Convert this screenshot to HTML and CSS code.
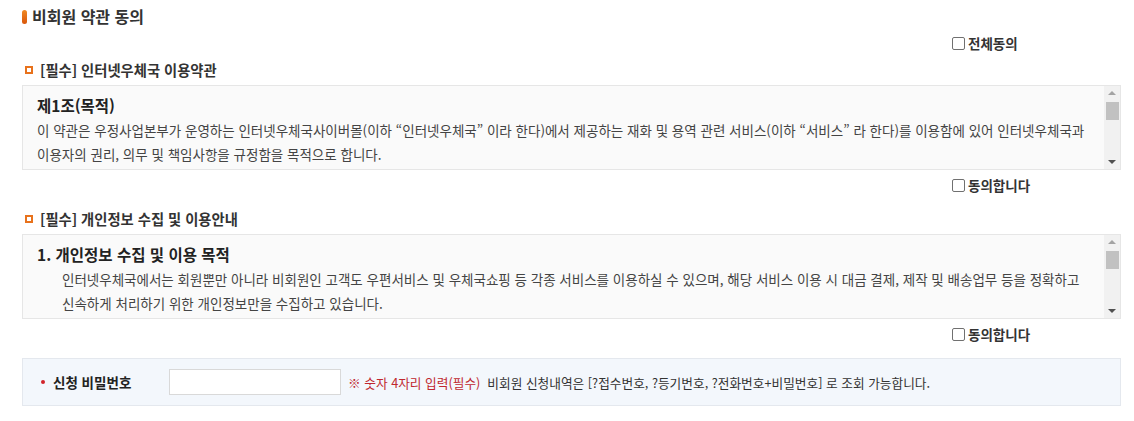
FILE: index.html
```html
<!DOCTYPE html>
<html lang="ko">

<head>
    <meta charset="utf-8">
    <title>비회원 약관 동의</title>
    <link rel="stylesheet" href="styles.css">
</head>

<body>
    <div class="wrap">
        <h2 class="page-title">비회원 약관 동의</h2>

        <div class="agree-all">
            <label><input type="checkbox" id="agreeAll">전체동의</label>
        </div>

        <h3 class="sub-title">[필수] 인터넷우체국 이용약관</h3>
        <div class="terms-box">
            <div class="terms-text">
                <h4>제1조(목적)</h4>
                <p>이 약관은 우정사업본부가 운영하는 인터넷우체국사이버몰(이하 “인터넷우체국” 이라 한다)에서 제공하는 재화 및 용역 관련 서비스(이하 “서비스” 라 한다)를 이용함에 있어 인터넷우체국과 이용자의 권리, 의무 및 책임사항을 규정함을 목적으로 합니다.</p>
                <h4>제2조(정의)</h4>
                <p>① “인터넷우체국”이란 우정사업본부가 재화 또는 용역을 이용자에게 제공하기 위하여 컴퓨터 등 정보통신설비를 이용하여 재화 또는 용역을 거래할 수 있도록 설정한 가상의 영업장을 말합니다.</p>
            </div>
            <div class="scrollbar">
                <span class="sb-up"></span>
                <span class="sb-thumb"></span>
                <span class="sb-track"></span>
                <span class="sb-down"></span>
            </div>
        </div>
        <div class="agree-row">
            <label><input type="checkbox" id="agree1">동의합니다</label>
        </div>

        <h3 class="sub-title">[필수] 개인정보 수집 및 이용안내</h3>
        <div class="terms-box">
            <div class="terms-text">
                <h4>1. 개인정보 수집 및 이용 목적</h4>
                <p class="indent">인터넷우체국에서는 회원뿐만 아니라 비회원인 고객도 우편서비스 및 우체국쇼핑 등 각종 서비스를 이용하실 수 있으며, 해당 서비스 이용 시 대금 결제, 제작 및 배송업무 등을 정확하고 신속하게 처리하기 위한 개인정보만을 수집하고 있습니다.</p>
                <h4>2. 수집하는 개인정보 항목</h4>
                <p class="indent">성명, 휴대전화번호, 주소, 이메일, 신청 비밀번호</p>
            </div>
            <div class="scrollbar">
                <span class="sb-up"></span>
                <span class="sb-thumb"></span>
                <span class="sb-track"></span>
                <span class="sb-down"></span>
            </div>
        </div>
        <div class="agree-row">
            <label><input type="checkbox" id="agree2">동의합니다</label>
        </div>

        <div class="pw-box">
            <span class="pw-label">신청 비밀번호</span>
            <input type="password" class="pw-input" maxlength="4">
            <span class="pw-note">※ 숫자 4자리 입력(필수)</span>
            <span class="pw-desc">비회원 신청내역은 [?접수번호, ?등기번호, ?전화번호+비밀번호] 로 조회 가능합니다.</span>
        </div>
    </div>
</body>

</html>
```

FILE: styles.css
```css
body {
    margin: 0;
    font-family: "Noto Sans CJK KR", "Noto Sans", sans-serif;
    color: #333;
    background: #fff;
}

.wrap {
    width: 1099px;
    padding: 5px 0 0 22px;
}

.page-title {
    position: relative;
    margin: 0;
    padding-left: 10px;
    font-size: 16px;
    line-height: 22px;
    font-weight: bold;
    color: #333;
}

.page-title:before {
    content: "";
    position: absolute;
    left: 0;
    top: 5px;
    width: 5px;
    height: 14px;
    border-radius: 3px;
    background: linear-gradient(#f08a24, #d9560a);
}

.agree-all,
.agree-row {
    display: flex;
    padding-left: 930px;
}

.agree-all {
    margin-top: 5px;
}

.agree-row {
    margin-top: 4px;
    margin-bottom: 13px;
}

.agree-all label,
.agree-row label {
    display: flex;
    align-items: center;
    font-size: 13.5px;
    line-height: 22px;
    font-weight: bold;
    color: #333;
}

input[type="checkbox"] {
    appearance: none;
    box-sizing: border-box;
    width: 13px;
    height: 13px;
    margin: 0 3px 0 0;
    border: 1px solid #707070;
    border-radius: 2px;
    background: #fff;
}

.sub-title {
    position: relative;
    margin: 6px 0 5px;
    padding-left: 18px;
    font-size: 14.3px;
    line-height: 20px;
    font-weight: bold;
    color: #333;
}

.sub-title:before {
    content: "";
    position: absolute;
    left: 3px;
    top: 6px;
    width: 4px;
    height: 4px;
    border: 2px solid #e8721c;
}

.terms-box {
    display: flex;
    height: 83px;
    overflow: hidden;
    border: 1px solid #e6e6e6;
    background: #fafafa;
}

.terms-text {
    flex: 1;
    overflow: hidden;
    padding: 0 12px 0 14px;
}

.terms-text h4 {
    margin: 8px 0 2px;
    font-size: 15.5px;
    line-height: 22px;
    font-weight: bold;
    color: #222;
}

.terms-text p {
    margin: 0;
    font-size: 13.5px;
    line-height: 24px;
    color: #444;
    word-break: keep-all;
}

.terms-text p.indent {
    padding-left: 25px;
}

.scrollbar {
    display: flex;
    flex-direction: column;
    width: 16px;
    background: #f1f1f1;
}

.sb-up,
.sb-down {
    position: relative;
    height: 15px;
}

.sb-up:after,
.sb-down:after {
    content: "";
    position: absolute;
    left: 4px;
    top: 5px;
    border-left: 4px solid transparent;
    border-right: 4px solid transparent;
}

.sb-up:after {
    border-bottom: 4px solid #a3a3a3;
}

.sb-down:after {
    top: 6px;
    border-top: 4px solid #505050;
}

.sb-thumb {
    height: 18px;
    margin: 1px 1px 0 2px;
    background: #c1c1c1;
}

.sb-track {
    flex: 1;
}

.pw-box {
    display: flex;
    align-items: center;
    margin-top: 13px;
    height: 46px;
    border: 1px solid #e4e8ee;
    background: #f3f7fc;
    padding-left: 30px;
}

.pw-label {
    position: relative;
    width: 116px;
    font-size: 13.5px;
    font-weight: bold;
    color: #222;
}

.pw-label:before {
    content: "";
    position: absolute;
    left: -12px;
    top: 8px;
    width: 4px;
    height: 4px;
    border-radius: 50%;
    background: #d1232a;
}

.pw-input {
    box-sizing: border-box;
    width: 172px;
    height: 26px;
    margin: 0 7px 0 0;
    padding: 0 4px;
    border: 1px solid #d9d9d9;
    background: #fff;
}

.pw-note {
    font-size: 12.7px;
    color: #c0282f;
    margin-right: 7px;
}

.pw-desc {
    font-size: 12.7px;
    color: #333;
}
```
